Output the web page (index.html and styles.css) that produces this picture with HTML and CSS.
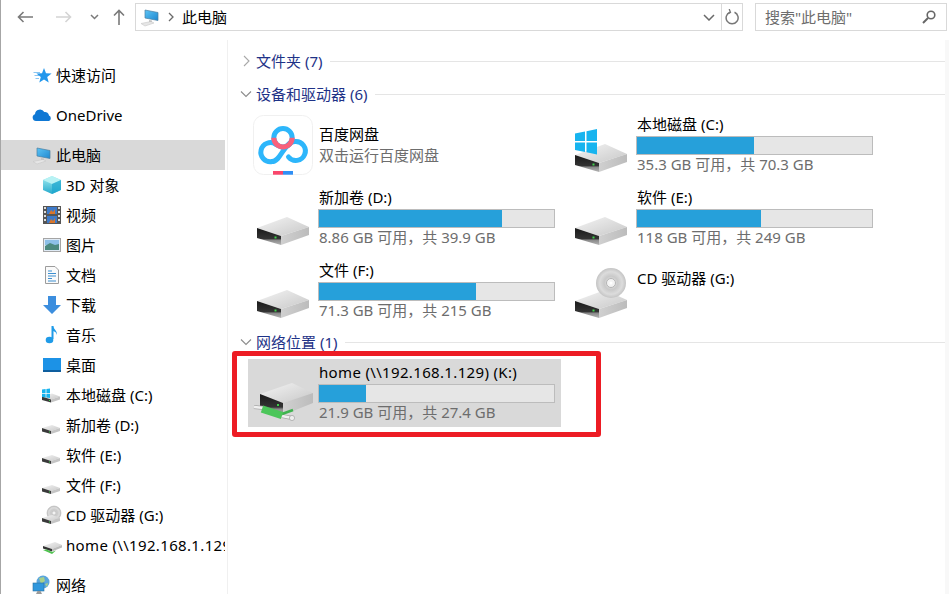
FILE: index.html
```html
<!DOCTYPE html>
<html lang="zh-CN">
<head>
<meta charset="utf-8">
<title>此电脑</title>
<link rel="stylesheet" href="styles.css">
</head>
<body>
<svg class="sprite" aria-hidden="true">
  <defs>
    <linearGradient id="gTop" x1="0" y1="0" x2="1" y2="1"><stop offset="0" stop-color="#f4f4f4"/><stop offset="1" stop-color="#c8c8c8"/></linearGradient>
    <linearGradient id="gFront" x1="0" y1="0" x2="0" y2="1"><stop offset="0" stop-color="#1a1a1a"/><stop offset=".62" stop-color="#333"/><stop offset=".72" stop-color="#8a8a8a"/><stop offset="1" stop-color="#b5b5b5"/></linearGradient>
    <linearGradient id="gSide" x1="0" y1="0" x2="1" y2="0"><stop offset="0" stop-color="#d0d0d0"/><stop offset="1" stop-color="#bcbcbc"/></linearGradient>
    <radialGradient id="gDisc"><stop offset="0" stop-color="#f4f4f4"/><stop offset=".45" stop-color="#c9c9c9"/><stop offset=".75" stop-color="#dcdcdc"/><stop offset="1" stop-color="#c4c4c4"/></radialGradient>
    <linearGradient id="gScreen" x1="0" y1="0" x2="1" y2="1"><stop offset="0" stop-color="#5cc4f5"/><stop offset="1" stop-color="#1f88d0"/></linearGradient>
    <linearGradient id="gCube" x1="0" y1="0" x2="0" y2="1"><stop offset="0" stop-color="#a6eef2"/><stop offset="1" stop-color="#24a9cc"/></linearGradient>

    <symbol id="drive" viewBox="0 0 70 68">
      <path d="M9 44 39 33 61 43 33 52Z" fill="url(#gTop)"/>
      <path d="M9 44 33 52V61L9 54Z" fill="url(#gFront)"/>
      <path d="M33 52 61 43V51L33 61Z" fill="url(#gSide)"/>
      <rect x="26.500" y="52.500" width="2" height="2" fill="#3fd04a"/>
    </symbol>
    <symbol id="drive-win" viewBox="0 0 70 68">
      <use href="#drive" width="70" height="68"/>
      <path d="M9 22.500 19 20.500V30H9ZM20.500 20.200 31 18V30H20.500ZM9 31.500H19V41L9 39ZM20.500 31.500H31V43.500L20.500 41.300Z" fill="#17b4ef"/>
    </symbol>
    <symbol id="drive-cd" viewBox="0 0 70 68">
      <use href="#drive" width="70" height="68"/>
      <circle cx="45" cy="26" r="15" fill="url(#gDisc)"/>
      <circle cx="45" cy="26" r="4.500" fill="#f3f3f3" stroke="#b4b4b4"/>
      <circle cx="45" cy="26" r="1.500" fill="#fff"/>
    </symbol>
    <symbol id="drive-net" viewBox="0 0 70 68">
      <path d="M12 35 44 24 65 34 35 44Z" fill="url(#gTop)"/>
      <path d="M12 35 35 44V56L12 47Z" fill="url(#gFront)"/>
      <path d="M35 44 65 34V44L35 56Z" fill="url(#gSide)"/>
      <rect x="29" y="45" width="2" height="2" fill="#3fd04a"/>
      <path d="M6 48 16 49M34 57 44 59" fill="none" stroke="#a8a8a8" stroke-width="4"/>
      <path d="M6 48 16 49M34 57 44 59" fill="none" stroke="#f0f0f0" stroke-width="2.500"/>
      <path d="M34 55 45 51" fill="none" stroke="#3fb34f" stroke-width="2.500"/>
      <path d="M14 50 34 56.500" fill="none" stroke="#4cc65a" stroke-width="7.500"/>
      <circle cx="44" cy="59" r="2.600" fill="#eee" stroke="#aaa" stroke-width=".8"/>
    </symbol>
    <symbol id="drive-s" viewBox="0 0 20 20">
      <path d="M0 13 10 10 18 13 9 16Z" fill="url(#gTop)"/>
      <path d="M0 13 9 16V19L0 16.500Z" fill="#3a3a3a"/>
      <path d="M9 16 18 13V16L9 19Z" fill="#c4c4c4"/>
      <rect x="7" y="16.500" width="1" height="1" fill="#3fd04a"/>
    </symbol>
    <symbol id="pc" viewBox="0 0 20 20">
      <path d="M5 3 18 5.500V13.500L5 11Z" fill="url(#gScreen)" stroke="#4a7ea0" stroke-width=".7"/>
      <path d="M1 16.500 11 14.500 14 16 5 19Z" fill="#e6e6e6" stroke="#c8c8c8" stroke-width=".6"/>
      <path d="M9 13 12 13.500V15L9 15Z" fill="#c4c4c4"/>
    </symbol>
  </defs>
</svg>

<div class="window">
  <header class="toolbar">
    <div class="nav-buttons">
      <svg class="nav-arrow" viewBox="0 0 16 12"><path d="M16 6H1.500M6.500 1 1.500 6 6.500 11" fill="none" stroke="#7a7a7a" stroke-width="1.600"/></svg>
      <svg class="nav-arrow nav-arrow--fwd" viewBox="0 0 16 12"><path d="M0 6H14.500M9.500 1 14.500 6 9.500 11" fill="none" stroke="#d4d4d4" stroke-width="1.600"/></svg>
      <svg class="nav-caret" viewBox="0 0 9 6"><path d="M1 1 4.500 4.500 8 1" fill="none" stroke="#7a7a7a" stroke-width="1.500"/></svg>
      <svg class="nav-up" viewBox="0 0 12 16"><path d="M6 16V1.500M1 6.500 6 1.500 11 6.500" fill="none" stroke="#7a7a7a" stroke-width="1.600"/></svg>
    </div>
    <div class="address">
      <svg class="address-icon"><use href="#pc"/></svg>
      <svg class="address-sep" viewBox="0 0 6 10"><path d="M1 1 5 5 1 9" fill="none" stroke="#6a6a6a" stroke-width="1.300"/></svg>
      <span class="address-text">此电脑</span>
      <svg class="address-caret" viewBox="0 0 12 7"><path d="M1 1 6 6 11 1" fill="none" stroke="#6a6a6a" stroke-width="1.500"/></svg>
      <span class="address-refresh">
        <svg viewBox="0 0 14 16"><path d="M5 3.200A6 6 0 1 0 9.500 3.300" fill="none" stroke="#777" stroke-width="1.500"/><path d="M4.200 0 5.500 3.400 2.500 5" fill="none" stroke="#777" stroke-width="1.300"/></svg>
      </span>
    </div>
    <div class="search">
      <span class="search-text">搜索"此电脑"</span>
      <svg class="search-icon" viewBox="0 0 14 14"><circle cx="9" cy="5" r="3.800" fill="none" stroke="#666" stroke-width="1.600"/><path d="M6 8 1 13" stroke="#666" stroke-width="2"/></svg>
    </div>
  </header>

  <div class="body">
    <nav class="sidebar">
      <div class="nav-group">
        <div class="nav-row">
          <svg class="nav-ico" viewBox="0 0 20 20"><path d="M1.500 7.500H8M2.500 10.500H7M3.500 13.500H7" stroke="#8ac6f2"/><path d="M12 3 14 8.200 19.600 8.500 15.200 12 16.700 17.500 12 14.400 7.300 17.500 8.800 12 4.400 8.500 10 8.200Z" fill="#2297ec"/></svg>
          <span>快速访问</span>
        </div>
      </div>
      <div class="nav-group">
        <div class="nav-row">
          <svg class="nav-ico" viewBox="0 0 20 20"><path d="M4 16A3.500 3.500 0 0 1 3 9.200 5 5 0 0 1 12.300 7 4 4 0 0 1 17 10.500 3 3 0 0 1 17 16Z" fill="#0f78d4"/></svg>
          <span>OneDrive</span>
        </div>
      </div>
      <div class="nav-group">
        <div class="nav-row nav-row--selected">
          <svg class="nav-ico"><use href="#pc"/></svg>
          <span>此电脑</span>
        </div>
        <div class="nav-row nav-row--child">
          <svg class="nav-ico" viewBox="0 0 20 20"><path d="M10 1 19 5V15L10 19 1 15V5Z" fill="url(#gCube)"/><path d="M1 5 10 9 19 5 10 1Z" fill="#b8f2f4"/><path d="M10 9 19 5V15L10 19Z" fill="#1ea6cf" opacity=".7"/></svg>
          <span>3D 对象</span>
        </div>
        <div class="nav-row nav-row--child">
          <svg class="nav-ico" viewBox="0 0 20 20"><rect x="1" y="1" width="18" height="18" fill="#555"/><rect x="2" y="2" width="2" height="2" fill="#ddd"/><rect x="2" y="6" width="2" height="2" fill="#ddd"/><rect x="2" y="10" width="2" height="2" fill="#ddd"/><rect x="2" y="14" width="2" height="2" fill="#ddd"/><rect x="16" y="2" width="2" height="2" fill="#ddd"/><rect x="16" y="6" width="2" height="2" fill="#ddd"/><rect x="16" y="10" width="2" height="2" fill="#ddd"/><rect x="16" y="14" width="2" height="2" fill="#ddd"/><rect x="5" y="2" width="10" height="7" fill="#3d7ac9"/><rect x="5" y="11" width="10" height="7" fill="#3d7ac9"/><path d="M7 9 9 5 11 7 13 4V9ZM7 18 9 14 11 16 13 13V18Z" fill="#d9762c"/></svg>
          <span>视频</span>
        </div>
        <div class="nav-row nav-row--child">
          <svg class="nav-ico" viewBox="0 0 20 20"><rect x="1.500" y="3.500" width="17" height="13" fill="#dfeaf5" stroke="#a5a5a5"/><rect x="3" y="5" width="14" height="5" fill="#8dc0e8"/><path d="M3 11 8 8 13 10 17 9V15H3Z" fill="#4c8a80"/></svg>
          <span>图片</span>
        </div>
        <div class="nav-row nav-row--child">
          <svg class="nav-ico" viewBox="0 0 20 20"><path d="M3.500 1.500H13L16.500 5V18.500H3.500Z" fill="#fafafa" stroke="#9c9c9c"/><path d="M6 6H10M6 8.500H14M6 11H14M6 13.500H10M6 16H14" stroke="#3d8fd0"/></svg>
          <span>文档</span>
        </div>
        <div class="nav-row nav-row--child">
          <svg class="nav-ico" viewBox="0 0 20 20"><path d="M6 1H14V10H19L10 19 1 10H6Z" fill="#3c8ede"/></svg>
          <span>下载</span>
        </div>
        <div class="nav-row nav-row--child">
          <svg class="nav-ico" viewBox="0 0 20 20"><path d="M10.500 1V14" stroke="#1f9be8" stroke-width="2"/><path d="M11 1C12 5 16 6 14.500 10 14.500 7 12.500 6.500 11 6Z" fill="#1f9be8"/><ellipse cx="7.500" cy="15" rx="3.800" ry="3.300" fill="#1f9be8"/></svg>
          <span>音乐</span>
        </div>
        <div class="nav-row nav-row--child">
          <svg class="nav-ico" viewBox="0 0 20 20"><rect x="1" y="3" width="18" height="14" fill="#1c92e6"/><rect x="1" y="15" width="18" height="2" fill="#0e5e9e"/></svg>
          <span>桌面</span>
        </div>
        <div class="nav-row nav-row--child">
          <svg class="nav-ico" viewBox="0 0 20 20"><use href="#drive-s" y="-1.500" width="20" height="20"/><path d="M0 4.500 3.600 4V8H0ZM4.400 4 8 3.500V8H4.400ZM0 8.800H3.600V12.500L0 12ZM4.400 8.800H8V13L4.400 12.500Z" fill="#17b4ef"/></svg>
          <span>本地磁盘 (C:)</span>
        </div>
        <div class="nav-row nav-row--child">
          <svg class="nav-ico"><use href="#drive-s"/></svg>
          <span>新加卷 (D:)</span>
        </div>
        <div class="nav-row nav-row--child">
          <svg class="nav-ico"><use href="#drive-s"/></svg>
          <span>软件 (E:)</span>
        </div>
        <div class="nav-row nav-row--child">
          <svg class="nav-ico"><use href="#drive-s"/></svg>
          <span>文件 (F:)</span>
        </div>
        <div class="nav-row nav-row--child">
          <svg class="nav-ico" viewBox="0 0 20 20"><circle cx="12" cy="8" r="7" fill="url(#gDisc)" stroke="#aaa" stroke-width=".5"/><circle cx="12" cy="8" r="2" fill="#f3f3f3" stroke="#aaa" stroke-width=".5"/><use href="#drive-s" width="20" height="20"/></svg>
          <span>CD 驱动器 (G:)</span>
        </div>
        <div class="nav-row nav-row--child">
          <svg class="nav-ico" viewBox="0 0 20 20"><path d="M1 11 13 7 20 10 10 14Z" fill="url(#gTop)"/><path d="M1 11 10 14V16.500L1 13.500Z" fill="#333"/><path d="M10 14 20 10V12.500L10 16.500Z" fill="#bbb"/><path d="M1 15 5 14.500 10 17 14 15.500 10 19Z" fill="#4fc34f"/></svg>
          <span class="wide-latin">home (\\192.168.1.129) (K:)</span>
        </div>
      </div>
      <div class="nav-group">
        <div class="nav-row">
          <svg class="nav-ico" viewBox="0 0 20 20"><circle cx="11" cy="7" r="6.500" fill="#5aa6dd"/><path d="M7 3 12 2 13 6 9 9ZM13 9 16 8 15 12Z" fill="#a8d08a"/><rect x="1" y="8" width="11" height="8" fill="#2f97dd" stroke="#2a6f9f" stroke-width=".6"/><path d="M4 19H10L8.500 16H5.500Z" fill="#9a9a9a"/></svg>
          <span>网络</span>
        </div>
      </div>
    </nav>

    <main class="content">
      <section class="group">
        <div class="group-head">
          <svg class="chev" viewBox="0 0 12 12"><path d="M4 1 9 6 4 11" fill="none" stroke="#a8a8a8" stroke-width="1.100"/></svg>
          <span class="group-title">文件夹 (7)</span>
          <span class="group-line"></span>
        </div>
      </section>

      <section class="group">
        <div class="group-head">
          <svg class="chev" viewBox="0 0 12 12"><path d="M1 3.500 6 8.500 11 3.500" fill="none" stroke="#8c8c8c" stroke-width="1.100"/></svg>
          <span class="group-title">设备和驱动器 (6)</span>
          <span class="group-line"></span>
        </div>
        <div class="tiles">
          <div class="tile">
            <div class="tile-icon">
              <svg class="baidu" viewBox="0 0 60 60">
                <rect x=".5" y=".5" width="59" height="59" rx="10" fill="#fff" stroke="#f0f0f0"/>
                <path d="M23 29.500A9.500 9.500 0 1 0 19 46.500C28 46.500 31 26.500 42 26.500A9.500 9.500 0 1 1 35.500 42" fill="none" stroke="#2db6fb" stroke-width="5" stroke-linecap="round"/>
                <circle cx="30" cy="22.700" r="9.200" fill="none" stroke="#2db6fb" stroke-width="5"/>
                <path d="M20.800 22.700A9.200 9.200 0 0 0 39.200 22.700" fill="none" stroke="#f9607b" stroke-width="5"/>
                <rect x="20" y="56" width="10" height="3.700" fill="#f9466b"/>
                <rect x="30" y="56" width="10" height="3.700" fill="#2f8ff5"/>
              </svg>
            </div>
            <div class="tile-text tile-text--app">
              <div class="tile-name">百度网盘</div>
              <div class="tile-sub">双击运行百度网盘</div>
            </div>
          </div>
          <div class="tile">
            <div class="tile-icon"><svg class="tile-svg"><use href="#drive-win"/></svg></div>
            <div class="tile-text">
              <div class="tile-name">本地磁盘 (C:)</div>
              <div class="bar"><div class="bar-fill" style="width:49.8%"></div></div>
              <div class="tile-sub">35.3 GB 可用，共 70.3 GB</div>
            </div>
          </div>
          <div class="tile">
            <div class="tile-icon"><svg class="tile-svg"><use href="#drive"/></svg></div>
            <div class="tile-text">
              <div class="tile-name">新加卷 (D:)</div>
              <div class="bar"><div class="bar-fill" style="width:78%"></div></div>
              <div class="tile-sub">8.86 GB 可用，共 39.9 GB</div>
            </div>
          </div>
          <div class="tile">
            <div class="tile-icon"><svg class="tile-svg"><use href="#drive"/></svg></div>
            <div class="tile-text">
              <div class="tile-name">软件 (E:)</div>
              <div class="bar"><div class="bar-fill" style="width:52.8%"></div></div>
              <div class="tile-sub">118 GB 可用，共 249 GB</div>
            </div>
          </div>
          <div class="tile">
            <div class="tile-icon"><svg class="tile-svg"><use href="#drive"/></svg></div>
            <div class="tile-text">
              <div class="tile-name">文件 (F:)</div>
              <div class="bar"><div class="bar-fill" style="width:67%"></div></div>
              <div class="tile-sub">71.3 GB 可用，共 215 GB</div>
            </div>
          </div>
          <div class="tile">
            <div class="tile-icon"><svg class="tile-svg"><use href="#drive-cd"/></svg></div>
            <div class="tile-text tile-text--cd">
              <div class="tile-name">CD 驱动器 (G:)</div>
            </div>
          </div>
        </div>
      </section>

      <section class="group group--net">
        <div class="group-head">
          <svg class="chev" viewBox="0 0 12 12"><path d="M1 3.500 6 8.500 11 3.500" fill="none" stroke="#8c8c8c" stroke-width="1.100"/></svg>
          <span class="group-title">网络位置 (1)</span>
          <span class="group-line"></span>
        </div>
        <div class="tiles">
          <div class="tile tile--selected">
            <div class="tile-icon"><svg class="tile-svg"><use href="#drive-net"/></svg></div>
            <div class="tile-text">
              <div class="tile-name wide-latin">home (\\192.168.1.129) (K:)</div>
              <div class="bar"><div class="bar-fill" style="width:20%"></div></div>
              <div class="tile-sub">21.9 GB 可用，共 27.4 GB</div>
            </div>
          </div>
        </div>
      </section>

      <div class="highlight"></div>
    </main>
    <div class="scroll-strip"></div>
  </div>
</div>
</body>
</html>
```

FILE: styles.css
```css
* { box-sizing: border-box; }

html, body {
  margin: 0;
  height: 100%;
  overflow: hidden;
  background: #fff;
}

body {
  font: 15px/20px "Noto Sans", "Noto Sans CJK SC", sans-serif;
  color: #000;
}

.sprite {
  position: absolute;
  width: 0;
  height: 0;
}

svg { display: block; flex: none; }

.wide-latin { letter-spacing: .34px; }

.window {
  height: 594px;
  display: flex;
  flex-direction: column;
  border-left: 1px solid #a6a6a6;
  overflow: hidden;
}

/* toolbar */
.toolbar {
  height: 40px;
  flex: none;
  display: flex;
  align-items: flex-start;
  padding-top: 3px;
}

.nav-buttons {
  width: 134px;
  height: 28px;
  flex: none;
  display: flex;
  align-items: center;
  padding-left: 16px;
}

.nav-arrow { width: 16px; height: 12px; }
.nav-arrow--fwd { margin-left: 23px; }
.nav-caret { width: 9px; height: 6px; margin-left: 18px; }
.nav-up { width: 12px; height: 16px; margin-left: 14px; }

.address {
  width: 608px;
  height: 28px;
  flex: none;
  display: flex;
  align-items: center;
  border: 1px solid #d9d9d9;
  padding-left: 4px;
}

.address-icon { width: 20px; height: 20px; }
.address-sep { width: 6px; height: 10px; margin-left: 8px; }
.address-text { margin-left: 8px; flex: 1; }
.address-caret { width: 12px; height: 7px; margin-right: 6px; }

.address-refresh {
  width: 21px;
  height: 26px;
  flex: none;
  display: flex;
  align-items: center;
  justify-content: center;
  border-left: 1px solid #d9d9d9;
}

.address-refresh svg { width: 14px; height: 16px; }

.search {
  width: 192px;
  height: 28px;
  flex: none;
  margin-left: 12px;
  display: flex;
  align-items: center;
  justify-content: space-between;
  border: 1px solid #d9d9d9;
  padding: 0 10px 0 9px;
}

.search-text { color: #6d6d6d; }
.search-icon { width: 14px; height: 14px; }

/* layout */
.body {
  flex: 1;
  min-height: 0;
  display: flex;
}

/* sidebar */
.sidebar {
  width: 227px;
  flex: none;
  padding: 20px 0 0;
  border-right: 1px solid #f0f0f0;
  overflow: hidden;
}

.nav-group { margin-bottom: 10px; }

.nav-row {
  height: 30px;
  width: 224px;
  display: flex;
  align-items: center;
  padding-left: 31px;
  white-space: nowrap;
  overflow: hidden;
}

.nav-row--selected { background: #d9d9d9; }
.nav-row--child { padding-left: 41px; }

.nav-ico {
  width: 20px;
  height: 20px;
  margin-right: 4px;
}

/* content */
.content {
  position: relative;
  flex: 1;
  min-width: 0;
  padding: 11px 0 0 12px;
}

.group { margin-bottom: 13px; }
.group--net { margin-top: -6px; }

.group-head {
  height: 20px;
  display: flex;
  align-items: center;
}

.chev { width: 12px; height: 12px; margin-right: 4px; }
.group-title { color: #1e3287; white-space: nowrap; }

.group-line {
  flex: 1;
  height: 1px;
  margin-left: 8px;
  background: #e5e5e5;
}

.tiles {
  display: grid;
  grid-template-columns: 313px 313px;
  grid-auto-rows: 68px;
  gap: 5px;
  margin: 7px 0 0 8px;
}

.tile {
  display: flex;
  height: 68px;
}

.tile--selected { background: #d9d9d9; }

.tile-icon {
  width: 70px;
  height: 68px;
  flex: none;
}

.tile-svg { width: 70px; height: 68px; }
.baidu { width: 60px; height: 60px; margin: 4px 0 0 5px; }

.tile-text { width: 237px; padding-top: 3px; }
.tile-text--app { padding-top: 13px; line-height: 21px; }
.tile-text--cd { padding-top: 11px; }

.tile-name { padding-left: 1px; white-space: nowrap; }
.tile-sub { padding-left: 1px; color: #6d6d6d; white-space: nowrap; margin-top: -1px; }
.tile-text--app .tile-sub { margin-top: 0; }

.bar {
  height: 19px;
  margin-top: 2px;
  background: #e6e6e6;
  border: 1px solid #bcbcbc;
}

.bar-fill {
  height: 100%;
  background: #26a0da;
}

/* red annotation over the network tile */
.highlight {
  position: absolute;
  left: 4px;
  top: 311px;
  width: 369px;
  height: 86px;
  border: 5px solid #ed1c24;
  border-radius: 3px;
}

.scroll-strip {
  width: 4px;
  flex: none;
  background: #f8f8f8;
}
```
